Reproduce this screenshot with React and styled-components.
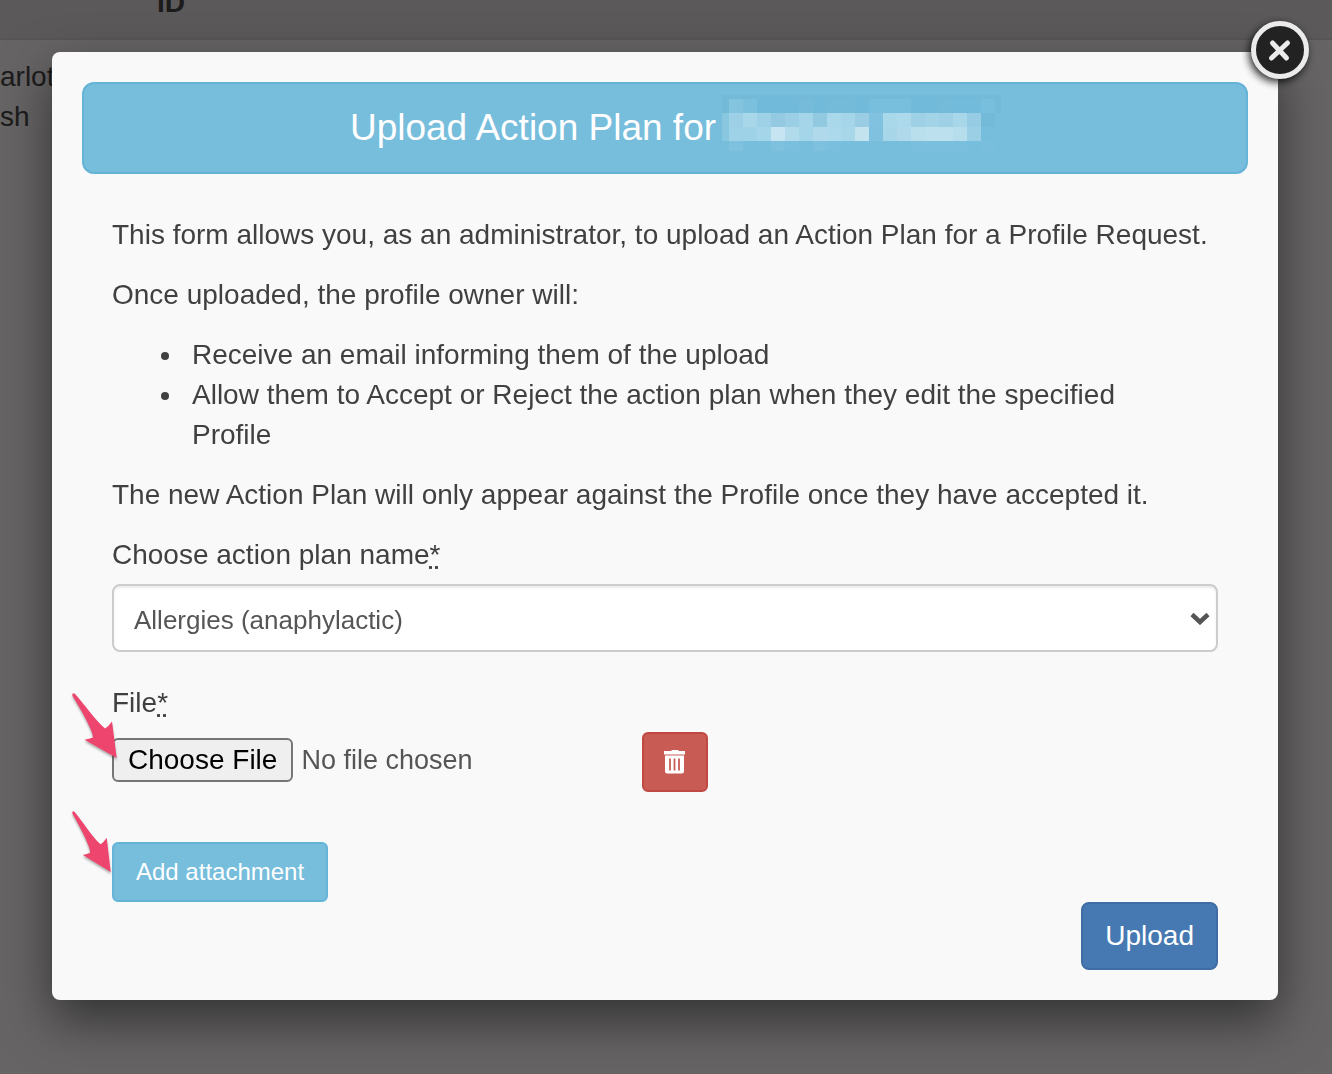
import React from "react";
import styled, { createGlobalStyle } from "styled-components";

const GlobalStyle = createGlobalStyle`
  *, *::before, *::after { box-sizing: border-box; }
  html { background: #666464; }
  body {
    margin: 0;
    color: #404040;
    font-family: "Liberation Sans", Arial, sans-serif;
    font-size: 28px;
    line-height: 40px;
  }
  button, input, select { font: inherit; margin: 0; }
`;

const Page = styled.div`
  min-height: 100vh;
  overflow: hidden;
`;

/* The listing behind the dialog, scrolled part of the way down and across. */
const Listing = styled.table`
  width: calc(100% + 8px);
  margin: -34px 0 0 -4px;
  border-collapse: collapse;
  color: #1c1b1b;
`;

const HeadCell = styled.th`
  padding: 17px 4px 15px;
  border-bottom: 2px solid #575555;
  background: #5b5959;
  text-align: left;
  vertical-align: bottom;
  width: ${(p) => p.$width || "auto"};
`;

const Cell = styled.td`
  padding: 17px 4px 15px;
  vertical-align: top;
`;

const Overlay = styled.div`
  position: fixed;
  inset: 0;
  padding: 52px 54px 74px 52px;
`;

const Dialog = styled.section`
  position: relative;
  padding: 30px;
  border-radius: 8px;
  background: #f9f9f9;
  box-shadow: 0 20px 50px rgba(0, 0, 0, 0.5);
`;

const CloseButton = styled.button`
  position: absolute;
  top: -36px;
  right: -36px;
  width: 72px;
  height: 72px;
  padding: 0;
  border: 0;
  background: transparent;
  cursor: pointer;

  svg { display: block; overflow: visible; }
`;

const Banner = styled.h1`
  display: flex;
  align-items: center;
  justify-content: center;
  gap: 8px;
  height: 92px;
  margin: 0 0 41px;
  border: 2px solid #65b3d7;
  border-radius: 12px;
  background: #77bddc;
  color: #fff;
  font-size: 37px;
  font-weight: 400;

  svg { overflow: visible; }
`;

const Form = styled.form`
  display: flex;
  flex-direction: column;
  padding: 0 30px;
`;

const Paragraph = styled.p`
  margin: 0 0 20px;
`;

const Effects = styled.ul`
  margin: 0 0 20px;
  padding: 0 20px 0 72px;

  li { padding-left: 8px; }
`;

const Label = styled.label`
  display: block;
  margin-bottom: 9px;
`;

const Required = styled.abbr`
  text-decoration: underline dotted;
`;

const SelectBox = styled.div`
  display: grid;
  align-items: center;
  margin-bottom: 31px;

  > * { grid-area: 1 / 1; }
  > svg { justify-self: end; margin-right: 8px; pointer-events: none; }
`;

const Select = styled.select`
  appearance: none;
  width: 100%;
  height: 68px;
  padding: 4px 40px 0 20px;
  border: 2px solid #ccc;
  border-radius: 8px;
  background: #fff;
  box-shadow: inset 0 2px 2px rgba(0, 0, 0, 0.08);
  color: #555;
  font-size: 26px;
`;

const FileRow = styled.div`
  display: grid;
  grid-template-columns: 500px auto;
  justify-content: start;
  align-items: center;
  gap: 30px;
  margin-bottom: 50px;
`;

const Pointed = styled.div`
  position: relative;
  width: ${(p) => (p.$fit ? "fit-content" : "auto")};
`;

const Arrow = styled.svg`
  position: absolute;
  left: -40px;
  top: ${(p) => p.$top};
  pointer-events: none;
  overflow: visible;
  filter: drop-shadow(0 2px 1px rgba(0, 0, 0, 0.3));
`;

const FileInput = styled.input`
  display: block;
  width: 100%;
  padding-bottom: 4px;
  color: #555;
  font-size: 27px;

  &::file-selector-button {
    height: 44px;
    margin: 0 8px 0 0;
    padding: 0 14px;
    border: 2px solid #767676;
    border-radius: 6px;
    background: #efefef;
    color: #000;
    font: inherit;
    font-size: 28px;
  }
`;

const tones = {
  info: ["#77bddc", "#65b3d7"],
  danger: ["#c85c55", "#c04a43"],
  primary: ["#4679b2", "#3f6ca5"],
};

const Button = styled.button`
  display: flex;
  align-items: center;
  justify-content: center;
  height: ${(p) => (p.$large ? "68px" : "60px")};
  padding: 0 ${(p) => (p.$icon ? "20px" : "22px")};
  border: 2px solid ${(p) => tones[p.$tone][1]};
  border-radius: ${(p) => (p.$large ? "8px" : "6px")};
  background: ${(p) => tones[p.$tone][0]};
  color: #fff;
  font-size: ${(p) => (p.$large ? "28px" : "24px")};
  cursor: pointer;
`;

const Actions = styled.div`
  display: flex;
  justify-content: flex-end;
`;

/* Shades of the hidden name, one row of 14px squares per line. */
const mosaic = [
  ["#84c4df", "#7bc0dd", "#72bad9", "#72bad9", "#72bad9", "#76bcda", "#72bad9", "#74bbda", "#74bbda", "#72bad9", "#78bedd", "#78bedd", "#78bedd", "#72bad9", "#72bad9", "#74bbda", "#73bbda", "#73bbda", "#78bedd"],
  ["#9dd0e6", "#a9d7ea", "#9ed1e6", "#93cae2", "#9acfe5", "#a5d5e9", "#91c9e1", "#aad8eb", "#a5d5e9", "#9acde4", "#80c2df", "#aad8eb", "#add9ec", "#9ed1e6", "#a2d3e7", "#9fd1e6", "#a9d7ea", "#97cde4", "#73bad9"],
  ["#9ed2e7", "#9ed2e7", "#a5d5e9", "#c6e4f1", "#b1dbeb", "#a5d5e9", "#b0daeb", "#acd9eb", "#a8d7ea", "#c3e3ee", "#7fc1de", "#a8d6e9", "#b0daeb", "#b9dfed", "#bce0ee", "#bce0ee", "#b5ddec", "#9bcfe5", "#77bddc"],
];
const mosaicFoot = ["#7fc2df", "#77bddc", "#77bddc", "#7dc1de", "#7abfdd", "#77bddc", "#7dc1de", "#7abfdd", "#77bddc", "#77bddc", "#77bddc", "#77bddc", "#77bddc", "#7abfdd", "#7abfdd", "#7abfdd", "#7abfdd", "#77bddc", "#79bedd"];

function HiddenName() {
  return (
    <svg width="256" height="66" viewBox="0 0 256 66" shapeRendering="crispEdges" role="img" aria-label="Hidden name">
      <rect x="-2" y="0" width="279" height="18" fill="#73bad9" />
      <rect x="-2" y="18" width="7" height="28" fill="#89c7e0" />
      {mosaic.map((row, y) =>
        row.map((fill, x) => (
          <rect key={`${x}-${y}`} x={5 + x * 14} y={4 + y * 14} width="14" height="14" fill={fill} />
        ))
      )}
      {mosaicFoot.map((fill, x) => (
        <rect key={x} x={5 + x * 14} y="46" width="14" height="10" fill={fill} />
      ))}
    </svg>
  );
}

function PointerArrow({ top, width, height }) {
  return (
    <Arrow $top={top} width={width} height={height} viewBox="0 0 45 65" preserveAspectRatio="none" aria-hidden="true">
      <path d="M0.300 2.500Q0 0 2 0.300L3.300 1.200C13 12 23 27 33 35.500Q37 33 40 28.500L44.700 65L12.500 46.800Q17 46 21 44.500Q21 42 19 37C14 25 7 14 0.300 2.500Z" fill="#ee456f" />
    </Arrow>
  );
}

export default function App() {
  return (
    <Page>
      <GlobalStyle />
      <Listing>
        <thead>
          <tr>
            <HeadCell $width="157px" />
            <HeadCell>ID</HeadCell>
          </tr>
        </thead>
        <tbody>
          <tr>
            <Cell>arlott<br />sh</Cell>
            <Cell />
          </tr>
        </tbody>
      </Listing>

      <Overlay>
        <Dialog role="dialog" aria-labelledby="dialog-title">
          <CloseButton type="button" aria-label="Close">
            <svg width="72" height="72" viewBox="0 0 72 72">
              <defs>
                <filter id="close-shadow" x="-30%" y="-30%" width="160%" height="160%">
                  <feGaussianBlur stdDeviation="4" />
                </filter>
              </defs>
              <circle cx="36" cy="37" r="29" fill="#000" opacity="0.85" filter="url(#close-shadow)" />
              <circle cx="38" cy="34" r="26.500" fill="#222" stroke="#ebebeb" strokeWidth="5" />
              <path d="M30.500 27L44.500 42M45.500 27L29.500 42" stroke="#ebebeb" strokeWidth="5" strokeLinecap="round" />
            </svg>
          </CloseButton>

          <Banner id="dialog-title">
            <span>Upload Action Plan for</span>
            <HiddenName />
          </Banner>

          <Form onSubmit={(e) => e.preventDefault()}>
            <Paragraph>
              This form allows you, as an administrator, to upload an Action Plan for a Profile Request.
            </Paragraph>
            <Paragraph>Once uploaded, the profile owner will:</Paragraph>
            <Effects>
              <li>Receive an email informing them of the upload</li>
              <li>Allow them to Accept or Reject the action plan when they edit the specified Profile</li>
            </Effects>
            <Paragraph>
              The new Action Plan will only appear against the Profile once they have accepted it.
            </Paragraph>

            <Label htmlFor="plan-name">
              Choose action plan name<Required title="required">*</Required>
            </Label>
            <SelectBox>
              <Select id="plan-name" defaultValue="anaphylactic">
                <option value="anaphylactic">Allergies (anaphylactic)</option>
              </Select>
              <svg width="20" height="14" viewBox="0 0 20 14" aria-hidden="true">
                <path d="M2 3.500L10 11L18 3.500" fill="none" stroke="#555" strokeWidth="4.500" />
              </svg>
            </SelectBox>

            <Label htmlFor="plan-file">
              File<Required title="required">*</Required>
            </Label>
            <FileRow>
              <Pointed>
                <FileInput id="plan-file" type="file" />
                <PointerArrow top="-45px" width="45" height="65" />
              </Pointed>
              <Button type="button" $tone="danger" $icon aria-label="Remove attachment">
                <svg width="22" height="24" viewBox="0 0 22 24" aria-hidden="true">
                  <path d="M0 1H7L8 0H14L15 1H21V4.500H0Z" fill="#fff" />
                  <path d="M1 5.500H20V21Q20 23.500 17.500 23.500H3.500Q1 23.500 1 21Z" fill="#fff" />
                  <path d="M6 8.500V20.500M10.500 8.500V20.500M15 8.500V20.500" stroke="#c85c55" strokeWidth="1.800" />
                </svg>
              </Button>
            </FileRow>

            <Pointed $fit>
              <Button type="button" $tone="info">Add attachment</Button>
              <PointerArrow top="-31px" width="39" height="61" />
            </Pointed>

            <Actions>
              <Button type="submit" $tone="primary" $large>Upload</Button>
            </Actions>
          </Form>
        </Dialog>
      </Overlay>
    </Page>
  );
}
